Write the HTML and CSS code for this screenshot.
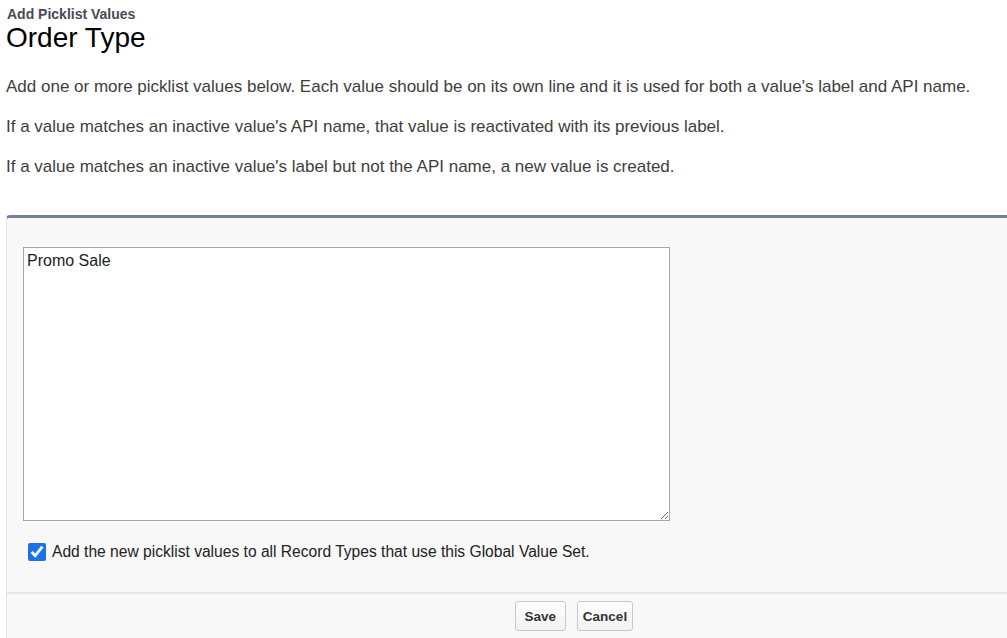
FILE: index.html
```html
<!DOCTYPE html>
<html>
<head>
<meta charset="utf-8">
<link rel="stylesheet" href="styles.css">
</head>
<body>
<div class="page">
  <div class="page-header">
    <div class="crumb">Add Picklist Values</div>
    <h1 class="title">Order Type</h1>
  </div>
  <div class="intro">
    <p>Add one or more picklist values below. Each value should be on its own line and it is used for both a value's label and API name.</p>
    <p>If a value matches an inactive value's API name, that value is reactivated with its previous label.</p>
    <p>If a value matches an inactive value's label but not the API name, a new value is created.</p>
  </div>
  <div class="panel">
    <div class="panel-body">
      <textarea class="values">Promo Sale</textarea>
      <label class="check-row">
        <input type="checkbox" class="check" checked>
        <span>Add the new picklist values to all Record Types that use this Global Value Set.</span>
      </label>
    </div>
    <div class="panel-footer">
      <button class="btn">Save</button>
      <button class="btn">Cancel</button>
    </div>
  </div>
</div>
</body>
</html>
```
FILE: styles.css
```css
html, body {
  margin: 0;
  padding: 0;
  background: #ffffff;
  font-family: Arial, "Liberation Sans", sans-serif;
  color: #3e3e3c;
  overflow: hidden;
}
.page {
  padding: 6px 0 0 6px;
}
.crumb {
  font-size: 14px;
  font-weight: bold;
  color: #4a4a56;
  line-height: 16px;
  padding-left: 1px;
}
.title {
  margin: 0;
  font-weight: normal;
  font-size: 28px;
  line-height: 32px;
  color: #000000;
  padding-left: 0;
}
.intro {
  margin-top: 23px;
}
.intro p {
  margin: 0 0 20px 0;
  font-size: 17px;
  line-height: 20px;
  color: #3e3e3c;
}
.intro p:last-child {
  margin-bottom: 0;
}
.panel {
  margin-top: 38px;
  margin-right: -8px;
  border-top: 3px solid #747e96;
  border-left: 1px solid #e6e6e6;
  border-top-left-radius: 4px;
  background: #f8f8f8;
}
.panel-body {
  padding: 29px 0 0 16px;
}
.values {
  display: block;
  box-sizing: border-box;
  width: 647px;
  height: 274px;
  margin: 0;
  padding: 3px 3px;
  border: 1px solid #a8a8a8;
  background: #ffffff;
  font-family: Arial, "Liberation Sans", sans-serif;
  font-size: 16px;
  line-height: 19px;
  color: #222;
  resize: both;
}
.check-row {
  display: flex;
  align-items: center;
  gap: 6px;
  height: 20px;
  margin: 21px 0 0 5px;
  font-size: 15.6px;
  color: #222;
}
.check {
  margin: 0;
  width: 18px;
  height: 18px;
  accent-color: #1a73e8;
}
.panel-footer {
  margin-top: 30px;
  border-top: 2px solid #e6e6e6;
  display: flex;
  justify-content: center;
  gap: 11px;
  padding: 7px 0 10px 126px;
}
.btn {
  font-family: Arial, "Liberation Sans", sans-serif;
  font-size: 13.5px;
  font-weight: bold;
  color: #333333;
  height: 30px;
  min-width: 51px;
  padding: 0 5px;
  border: 1px solid #c8c8c8;
  border-radius: 3px;
  background: linear-gradient(#ffffff, #f2f2f2);
}
```
